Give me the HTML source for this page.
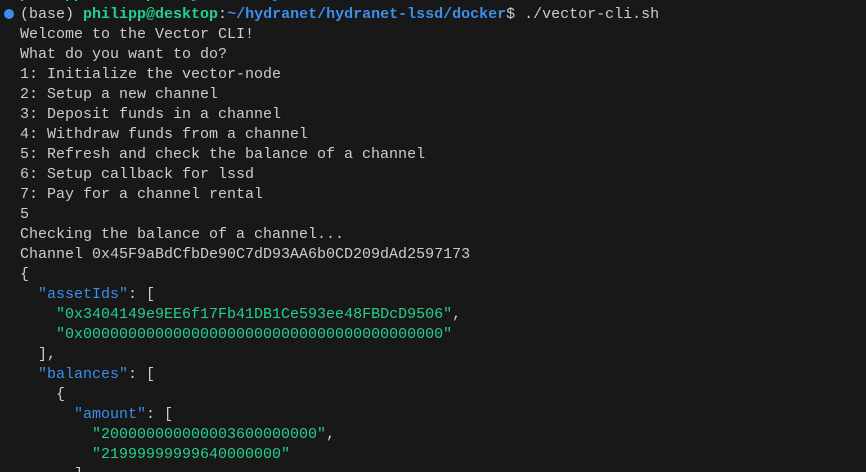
<!DOCTYPE html>
<html><head><meta charset="utf-8"><style>
html,body{margin:0;padding:0;background:#181818;width:866px;height:472px;overflow:hidden;position:relative}
pre{margin:0;position:absolute;left:20px;top:-15px;font-family:"Liberation Mono",monospace;font-size:15px;line-height:20px;color:#cccccc;letter-spacing:0}
.g{color:#23d18b;font-weight:bold}.b{color:#3b8eea;font-weight:bold}
.s{color:#23d18b}.k{color:#3b8eea}
.dot{position:absolute;left:4px;top:9px;width:10px;height:10px;border-radius:50%;background:#3b8eea}
</style></head><body>
<div class="dot"></div>
<pre><span class="g">philipp@desktop</span>:<span class="b">~/hydranet/hydranet-lssd/docker</span>$
(base) <span class="g">philipp@desktop</span>:<span class="b">~/hydranet/hydranet-lssd/docker</span>$ ./vector-cli.sh
Welcome to the Vector CLI!
What do you want to do?
1: Initialize the vector-node
2: Setup a new channel
3: Deposit funds in a channel
4: Withdraw funds from a channel
5: Refresh and check the balance of a channel
6: Setup callback for lssd
7: Pay for a channel rental
5
Checking the balance of a channel...
Channel 0x45F9aBdCfbDe90C7dD93AA6b0CD209dAd2597173
{
  <span class="k">"assetIds"</span>: [
    <span class="s">"0x3404149e9EE6f17Fb41DB1Ce593ee48FBDcD9506"</span>,
    <span class="s">"0x0000000000000000000000000000000000000000"</span>
  ],
  <span class="k">"balances"</span>: [
    {
      <span class="k">"amount"</span>: [
        <span class="s">"200000000000003600000000"</span>,
        <span class="s">"21999999999640000000"</span>
      ],
</pre>
</body></html>
